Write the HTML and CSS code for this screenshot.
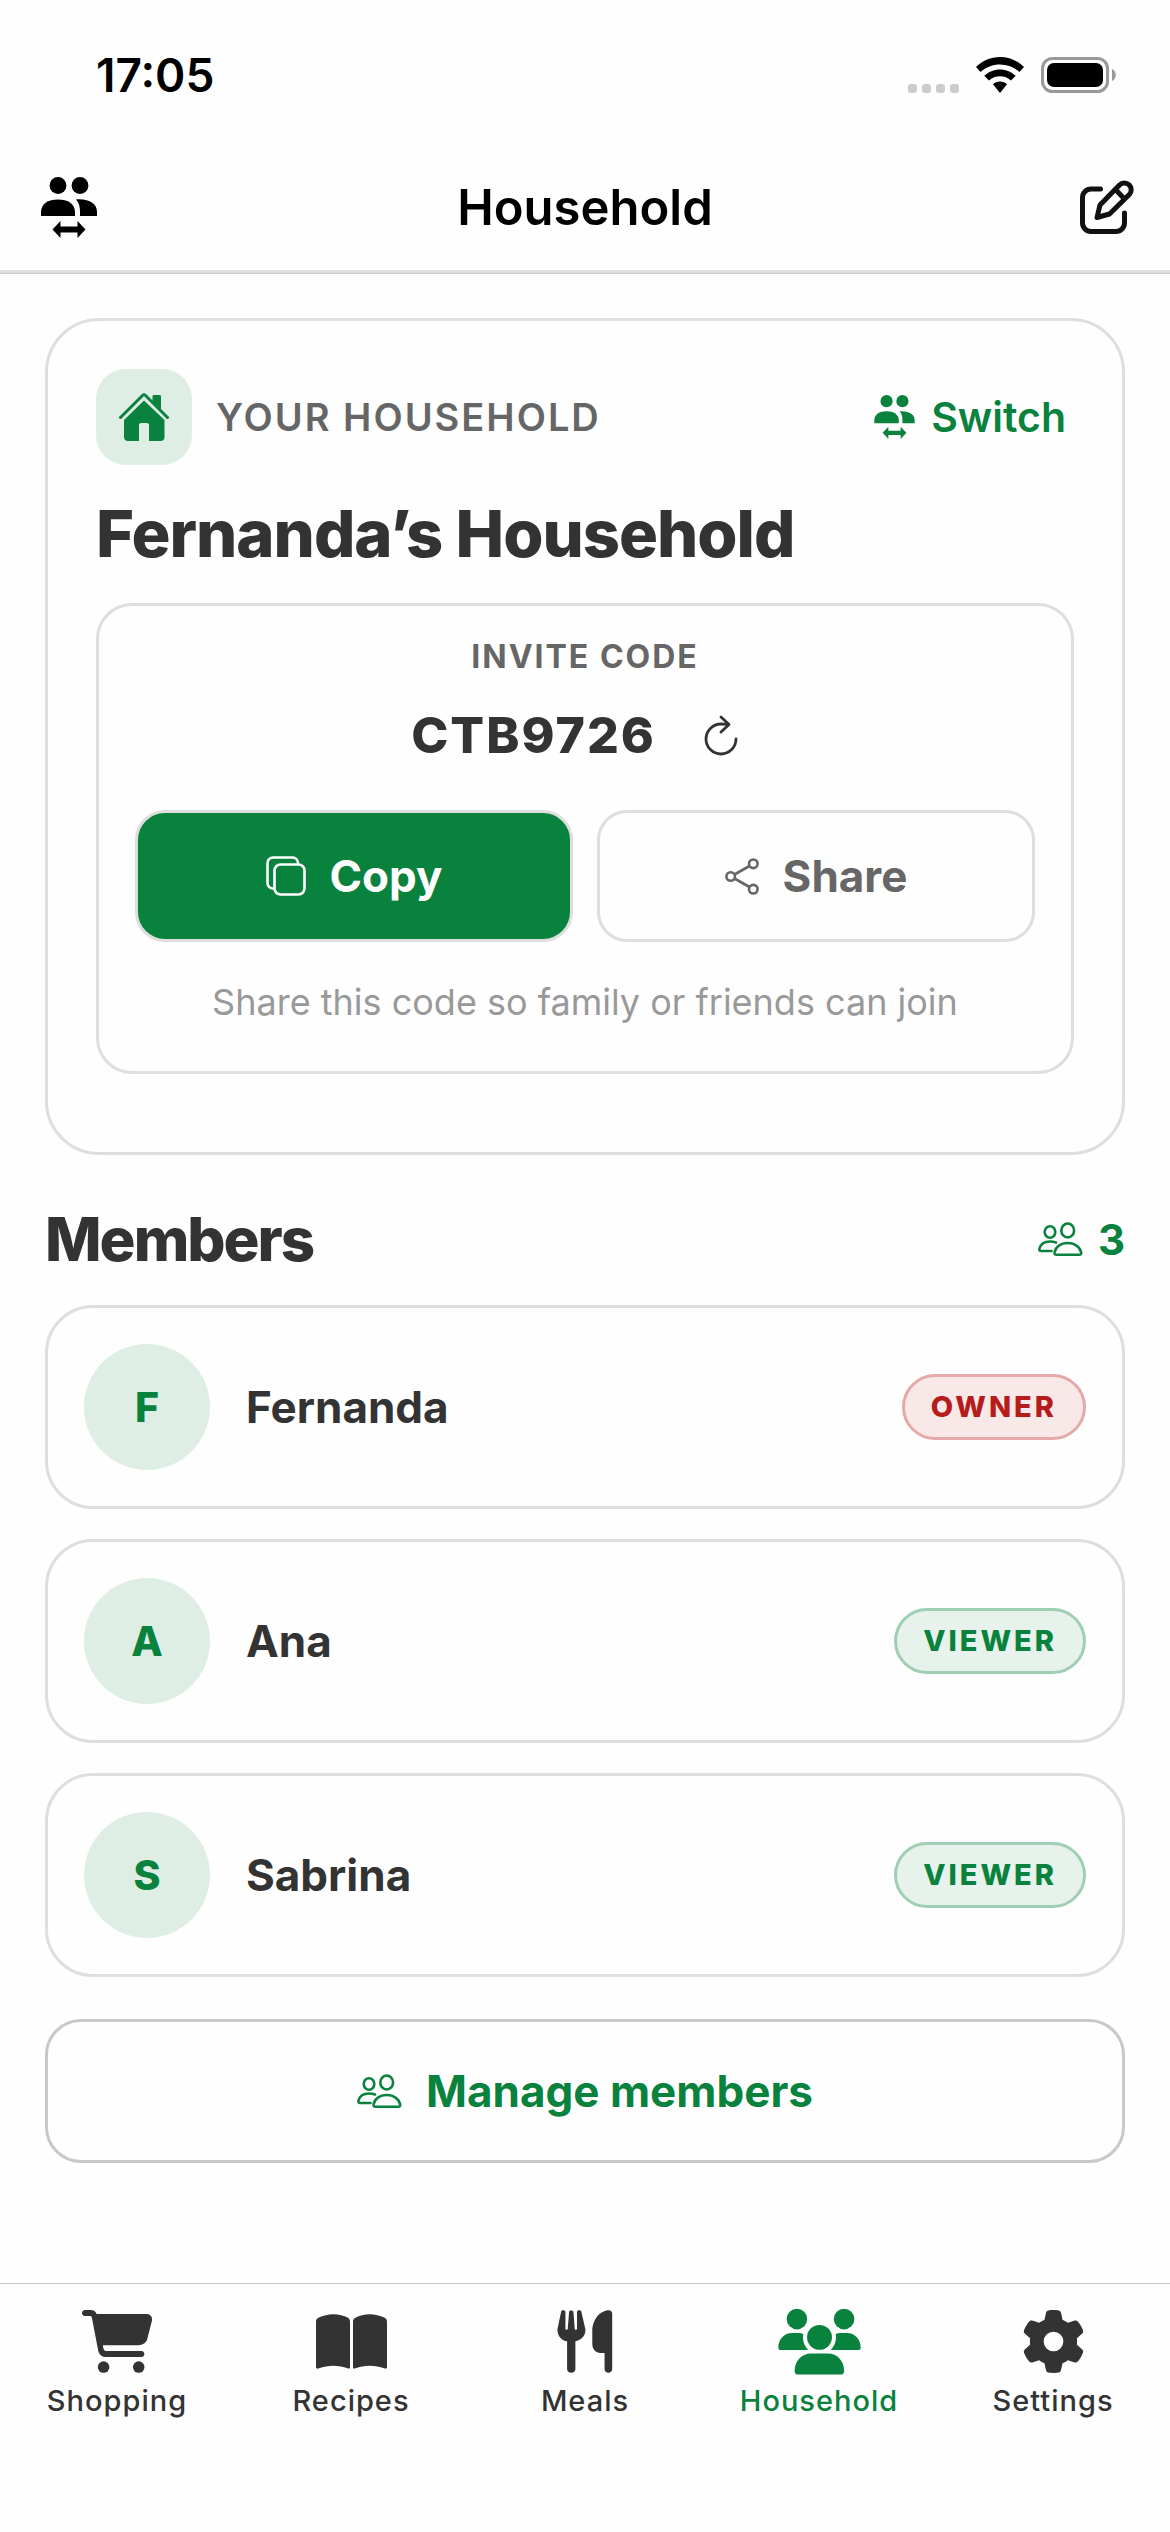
FILE: index.html
```
<!DOCTYPE html>
<html lang="en">
<head>
  <meta charset="UTF-8">
  <meta name="viewport" content="width=device-width, initial-scale=1">
  <title>Household</title>
  <link rel="stylesheet" href="styles.css">
</head>
<body>

  <!-- shared icons -->
  <svg class="sprite" aria-hidden="true">
    <symbol id="icon-switch" viewBox="0 0 56 61">
      <circle cx="17" cy="8.500" r="8.400"/>
      <circle cx="39" cy="8.500" r="8.400"/>
      <path d="M0 39v-4c0-8 7-12.500 17-12.500S34 27 34 35v4z"/>
      <path d="M35 22.500c13-1 21 4 21 12.500v4H39v-4c0-5-1-9.500-4-12.500z"/>
      <path d="M11.500 52.500l8-8.500v5.500h17V44l8 8.500-8 8.500v-5.500h-17V61z"/>
    </symbol>
    <symbol id="icon-members" viewBox="0 0 45 34">
      <g fill="none" stroke="currentColor" stroke-width="2.600" stroke-linecap="round" stroke-linejoin="round">
        <ellipse cx="12" cy="10" rx="5.300" ry="5.800"/>
        <ellipse cx="29.700" cy="8.500" rx="6.400" ry="7"/>
        <path d="M16.500 30.500c1-5.500 6-9.500 13.200-9.500s12.300 4 13.500 9.500c.300 1.300-.500 2.200-2 2.200H18.500c-1.500 0-2.300-.900-2-2.200z"/>
        <path d="M18 20.500c-2-.700-4-1-6-1-6 0-9.600 3.300-10.600 7.300-.300 1.300.500 2.200 1.600 2.200h10.500"/>
      </g>
    </symbol>
  </svg>

  <div class="statusbar">
    <span class="time">17:05</span>
    <div class="status-icons">
      <svg width="51" height="9" viewBox="0 0 51 9" fill="#ccc"><rect width="9" height="9" rx="3"/><rect x="14" width="9" height="9" rx="3"/><rect x="28" width="9" height="9" rx="3"/><rect x="42" width="9" height="9" rx="3"/></svg>
      <svg width="48" height="36" viewBox="0 0 48 36">
        <path d="M24 0C15 0 6.500 3.500 0 10l4.500 5C10 10 17 7.500 24 7.500s14 2.500 19.500 7.500l4.500-5C41.500 3.500 33 0 24 0z"/>
        <path d="M24 12.500c-6 0-11.500 2.300-15.700 6.300l4.600 4.700c3.100-2.700 7.100-4.200 11.100-4.200s8 1.500 11 4.200l4.700-4.700c-4.200-4-9.700-6.300-15.700-6.300z"/>
        <path d="M24 24.500c-2.700 0-5.200 1-7 2.700l7 8.800 7-8.800c-1.800-1.700-4.300-2.700-7-2.700z"/>
      </svg>
      <svg width="75" height="36" viewBox="0 0 75 36">
        <rect x="1.500" y="1.500" width="65" height="33" rx="10" fill="none" stroke="#999" stroke-width="3"/>
        <rect x="6" y="6" width="56" height="24" rx="7"/>
        <path d="M71 12c5 2 5 10 0 12z" fill="#999"/>
      </svg>
    </div>
  </div>

  <header class="navbar">
    <button class="icon-button" aria-label="Switch household"><svg width="56" height="61" fill="currentColor"><use href="#icon-switch"/></svg></button>
    <h1>Household</h1>
    <button class="icon-button" aria-label="Edit household">
      <svg width="54" height="54" viewBox="0 0 54 54" fill="none" stroke="#111" stroke-width="5" stroke-linecap="round" stroke-linejoin="round">
        <path d="M20.500 9H11a8.500 8.500 0 0 0-8.500 8.500V43a8.500 8.500 0 0 0 8.500 8.500h25a8.500 8.500 0 0 0 8.500-8.500V33"/>
        <path d="M39.500 5a6.600 6.600 0 0 1 9.800 9.500L29.500 34l-12.500 3.500L20 25z"/>
        <path d="M35.500 9.500l8.500 9"/>
      </svg>
    </button>
  </header>

  <main class="content">

    <section class="card household">
      <div class="household-head">
        <span class="tile">
          <svg width="50" height="48" viewBox="0 0 50 48" fill="currentColor">
            <path d="M25 7.500L45.500 27v17a4 4 0 0 1-4 4H30V32c0-1.200-.8-2-2-2h-6c-1.200 0-2 .8-2 2v16H9a4 4 0 0 1-4-4V27z"/>
            <path d="M33.500 8V3.500c0-1 .5-1.500 1.500-1.500h5.500c1 0 1.500.5 1.500 1.500V17z"/>
            <path d="M1.500 24.500L23.500 2.500q1.500-1.500 3 0l22 22" fill="none" stroke="currentColor" stroke-width="3" stroke-linecap="round"/>
          </svg>
        </span>
        <span class="eyebrow">YOUR HOUSEHOLD</span>
        <button class="switch"><svg width="41" height="44" fill="currentColor"><use href="#icon-switch"/></svg>Switch</button>
      </div>

      <h2 class="household-name">Fernanda’s Household</h2>

      <div class="invite">
        <div class="invite-label">INVITE CODE</div>
        <div class="invite-code">
          <span>CTB9726</span>
          <button class="refresh" aria-label="New code">
            <svg width="34" height="41" viewBox="0 0 34 41" fill="none" stroke="currentColor" stroke-width="2.800" stroke-linecap="round" stroke-linejoin="round">
              <path d="M24 9.500c-2-.500-5-.500-7-.500a15 15 0 1 0 15 15"/>
              <path d="M17 2l8 7.500-8 7.500"/>
            </svg>
          </button>
        </div>
        <div class="invite-actions">
          <button class="button primary">
            <svg width="40" height="40" viewBox="0 0 40 40" fill="none" stroke="currentColor" stroke-width="2.600">
              <rect x="8.500" y="8.500" width="30" height="30" rx="6"/>
              <path d="M8.500 32.500H7A5.500 5.500 0 0 1 1.500 27V7A5.500 5.500 0 0 1 7 1.500h19.500A5.500 5.500 0 0 1 32 7v1.500"/>
            </svg>
            Copy
          </button>
          <button class="button">
            <svg width="34" height="37" viewBox="0 0 34 37" fill="none" stroke="currentColor" stroke-width="2.600">
              <circle cx="5.700" cy="18.500" r="4.300"/>
              <circle cx="28.300" cy="5.800" r="4.300"/>
              <circle cx="28.300" cy="31.200" r="4.300"/>
              <path d="M9.500 16.500l15-8.500M9.500 20.500l15 8.500"/>
            </svg>
            Share
          </button>
        </div>
        <p class="hint">Share this code so family or friends can join</p>
      </div>
    </section>

    <div class="section-head">
      <h2>Members</h2>
      <span class="count"><svg width="45" height="34"><use href="#icon-members"/></svg>3</span>
    </div>

    <ul class="members">
      <li class="card member">
        <span class="avatar">F</span>
        <span class="name">Fernanda</span>
        <span class="badge owner">OWNER</span>
      </li>
      <li class="card member">
        <span class="avatar">A</span>
        <span class="name">Ana</span>
        <span class="badge">VIEWER</span>
      </li>
      <li class="card member">
        <span class="avatar">S</span>
        <span class="name">Sabrina</span>
        <span class="badge">VIEWER</span>
      </li>
    </ul>

    <button class="button manage"><svg width="45" height="34"><use href="#icon-members"/></svg>Manage members</button>

  </main>

  <nav class="tabbar">
    <a class="tab" href="#shopping">
      <span class="tab-icon"><svg width="70" height="63" viewBox="246 149 211 190" fill="currentColor">
        <path d="M255 149h17c9 0 16 5 18 12h151c11 0 18 9 16 20l-14 55c-3 12-14 19-26 19H309c1 10 3 18 12 18h104c12 0 12 18 0 18H320c-15 0-24-9-26-24L276 173c-1-4-3-6-6-6h-15c-12 0-12-18 0-18z"/>
        <circle cx="311" cy="321" r="17.500"/>
        <circle cx="417" cy="321" r="17.500"/>
      </svg></span>
      Shopping
    </a>
    <a class="tab" href="#recipes">
      <span class="tab-icon"><svg width="71" height="55" viewBox="948 161 213 163" fill="currentColor">
        <path d="M948 183c0-6 2-9 7-12 15-6 29-10 45-10s32 4 44 10c4 3 6 7 6 12v137c0 4-3 5-7 3-14-5-27-8-43-8s-29 3-43 8c-4 2-9 1-9-3z"/>
        <path d="M1059 183c0-5 2-9 7-12 13-6 27-10 43-10s30 4 45 10c5 3 7 6 7 12v137c0 4-4 5-8 3-14-5-28-8-44-8s-29 3-43 8c-4 2-7 1-7-3z"/>
      </svg></span>
      Recipes
    </a>
    <a class="tab" href="#meals">
      <span class="tab-icon"><svg width="56" height="63" viewBox="380 149 168 190" fill="currentColor">
        <path d="M392 154c1-6 13-6 13 1v50c0 5 7 5 7 0l4-51c1-5 12-5 13 0l4 51c0 5 7 5 7 0v-50c0-7 12-7 13-1l12 52c2 22-14 35-30 37v84c0 15-25 15-25 0v-84c-16-2-30-15-29-37z"/>
        <path d="M536 150c6 0 10 4 10 10v167c0 15-23 15-23 0v-48h-8c-18 0-29-10-29-28v-38c0-35 24-63 50-63z"/>
      </svg></span>
      Meals
    </a>
    <a class="tab active" href="#household" aria-current="page">
      <span class="tab-icon"><svg width="83" height="67" viewBox="233 143 250 201" fill="currentColor">
        <circle cx="290" cy="176" r="31"/>
        <circle cx="432" cy="176" r="31"/>
        <circle cx="358" cy="231" r="37.500"/>
        <path d="M234 262c0-25 17-44 42-44h20c5 0 9 1 13 3-3 18 3 36 15 48H242c-5 0-8-3-8-7z"/>
        <path d="M482 262c0-25-17-44-42-44h-20c-5 0-9 1-13 3 3 18-3 36-15 48h82c5 0 8-3 8-7z"/>
        <path d="M283 332c0-28 20-52 50-52h50c28 0 49 22 49 52 0 7-4 11-10 11H293c-6 0-10-4-10-11z"/>
      </svg></span>
      Household
    </a>
    <a class="tab" href="#settings">
      <span class="tab-icon"><svg width="63" height="63" viewBox="0 0 512 512" fill="currentColor">
        <path d="M495.900 166.600c3.200 8.700.5 18.400-6.400 24.600l-43.300 39.400c1.100 8.300 1.700 16.800 1.700 25.400s-.6 17.100-1.700 25.400l43.300 39.400c6.900 6.200 9.600 15.900 6.400 24.600-4.400 11.900-9.700 23.300-15.800 34.300l-4.700 8.100c-6.600 11-14 21.400-22.100 31.200-5.900 7.200-15.700 9.600-24.500 6.800l-55.700-17.700c-13.400 10.300-28.200 18.900-44 25.400l-12.500 57.100c-2 9.100-9 16.300-18.200 17.800-13.800 2.300-28 3.500-42.500 3.500s-28.700-1.200-42.500-3.500c-9.200-1.500-16.200-8.700-18.200-17.800l-12.500-57.100c-15.800-6.500-30.600-15.100-44-25.400L83.100 425.900c-8.800 2.800-18.600.3-24.500-6.800-8.100-9.800-15.500-20.200-22.100-31.200l-4.700-8.100c-6.100-11-11.400-22.400-15.800-34.300-3.200-8.700-.5-18.400 6.400-24.600l43.300-39.400C64.600 273.100 64 264.600 64 256s.6-17.100 1.700-25.400L22.400 191.200c-6.900-6.200-9.600-15.900-6.400-24.600 4.400-11.900 9.700-23.300 15.800-34.300l4.700-8.100c6.600-11 14-21.400 22.100-31.200 5.900-7.200 15.700-9.600 24.500-6.800l55.700 17.700c13.400-10.300 28.200-18.900 44-25.400l12.500-57.100c2-9.100 9-16.300 18.200-17.800C227.300 1.200 241.500 0 256 0s28.700 1.200 42.500 3.500c9.200 1.500 16.200 8.700 18.200 17.800l12.500 57.100c15.800 6.500 30.600 15.100 44 25.400l55.700-17.700c8.800-2.800 18.600-.3 24.500 6.800 8.100 9.800 15.500 20.200 22.100 31.200l4.700 8.100c6.100 11 11.400 22.400 15.800 34.300zM256 336a80 80 0 1 0 0-160 80 80 0 1 0 0 160z"/>
      </svg></span>
      Settings
    </a>
  </nav>

</body>
</html>
```

FILE: styles.css
```
* { box-sizing: border-box; }

body {
  margin: 0;
  min-height: 100vh;
  display: flex;
  flex-direction: column;
  background: #fefefe;
  color: #333;
  font-family: Inter, "Liberation Sans", sans-serif;
}

h1, h2, p, ul { margin: 0; padding: 0; }

svg { display: block; flex: none; }

button {
  margin: 0;
  padding: 0;
  border: 0;
  background: none;
  color: inherit;
  font: inherit;
}

.sprite { position: absolute; width: 0; height: 0; }

/* top */

.statusbar {
  display: flex;
  justify-content: space-between;
  align-items: center;
  height: 141px;
  padding: 9px 54px 0 96px;
  color: #000;
}

.time { font-size: 46px; font-weight: 600; }

.status-icons {
  display: flex;
  align-items: flex-end;
  gap: 17px;
}

.navbar {
  display: flex;
  justify-content: space-between;
  align-items: center;
  height: 132px;
  padding: 3px 36px 0;
  border-bottom: 3px solid #dedede;
  box-shadow: 0 1px 0 #c8c8c8;
  color: #000;
}

.navbar h1 { font-size: 49px; font-weight: 600; }

.icon-button {
  display: flex;
  justify-content: flex-end;
  width: 61px;
}

/* household card */

.content { padding: 45px; }

.card {
  border: 3px solid #dedede;
  border-radius: 48px;
}

.household {
  padding: 48px 48px 78px;
  border-radius: 54px;
}

.household-head {
  display: flex;
  align-items: center;
  gap: 24px;
}

.tile {
  display: flex;
  align-items: center;
  justify-content: center;
  width: 96px;
  height: 96px;
  border-radius: 30px;
  background: #deeee4;
  color: #09823d;
}

.eyebrow {
  flex: 1;
  color: #666;
  font-size: 38px;
  font-weight: 600;
  letter-spacing: 2px;
}

.switch {
  display: flex;
  align-items: center;
  gap: 16px;
  padding: 0 8px;
  color: #09823d;
  font-size: 41px;
  font-weight: 600;
}

.household-name {
  margin: 33px 0;
  font-size: 65px;
  line-height: 72px;
  font-weight: 800;
  letter-spacing: -1px;
}

.invite {
  padding: 30px 36px 45px;
  border: 3px solid #dedede;
  border-radius: 36px;
  text-align: center;
}

.invite-label {
  color: #666;
  font-size: 32px;
  line-height: 42px;
  font-weight: 700;
  letter-spacing: 2px;
}

.invite-code {
  display: flex;
  align-items: center;
  justify-content: center;
  gap: 27px;
  margin: 27px 0 45px;
  font-size: 50px;
  line-height: 60px;
  font-weight: 800;
  letter-spacing: 2px;
}

.refresh { padding: 0 21px; }

.invite-actions {
  display: grid;
  grid-template-columns: 1fr 1fr;
  gap: 24px;
}

.button {
  display: flex;
  align-items: center;
  justify-content: center;
  gap: 24px;
  height: 132px;
  border: 3px solid #dedede;
  border-radius: 30px;
  color: #666;
  font-size: 44px;
  font-weight: 700;
}

.primary {
  background: #09823d;
  color: #fff;
}

.hint {
  margin-top: 36px;
  color: #999;
  font-size: 36px;
  line-height: 48px;
}

/* members */

.section-head {
  display: flex;
  align-items: center;
  justify-content: space-between;
  padding: 48px 0 30px;
}

.section-head h2 {
  font-size: 60px;
  line-height: 72px;
  font-weight: 800;
  letter-spacing: -2px;
}

.count {
  display: flex;
  align-items: center;
  gap: 15px;
  color: #09823d;
  font-size: 42px;
  font-weight: 700;
}

.members {
  display: flex;
  flex-direction: column;
  gap: 30px;
  list-style: none;
}

.member {
  display: flex;
  align-items: center;
  gap: 36px;
  padding: 36px;
}

.avatar {
  display: flex;
  align-items: center;
  justify-content: center;
  width: 126px;
  height: 126px;
  border-radius: 50%;
  background: #deeee4;
  color: #09823d;
  font-size: 41px;
  font-weight: 800;
}

.name {
  flex: 1;
  font-size: 44px;
  font-weight: 700;
}

.badge {
  padding: 0 26px;
  border: 3px solid #9fceb3;
  border-radius: 33px;
  background: #e6f2eb;
  color: #09823d;
  font-size: 29px;
  line-height: 60px;
  font-weight: 800;
  letter-spacing: 3px;
}

.owner {
  border-color: #e6a9a9;
  background: #f8e8e8;
  color: #b71c1c;
}

.manage {
  width: 100%;
  height: 144px;
  margin-top: 42px;
  border-color: #c8c8c8;
  border-radius: 36px;
  color: #09823d;
}

/* bottom tabs */

.tabbar {
  display: flex;
  margin-top: auto;
  height: 249px;
  padding-top: 24px;
  border-top: 1px solid #c8c8c8;
}

.tab {
  flex: 1;
  color: #333;
  font-size: 29px;
  line-height: 42px;
  font-weight: 500;
  letter-spacing: 1px;
  text-align: center;
  text-decoration: none;
}

.tab-icon {
  display: flex;
  align-items: center;
  justify-content: center;
  height: 67px;
  margin-bottom: 5px;
}

.active { color: #09823d; }
```
